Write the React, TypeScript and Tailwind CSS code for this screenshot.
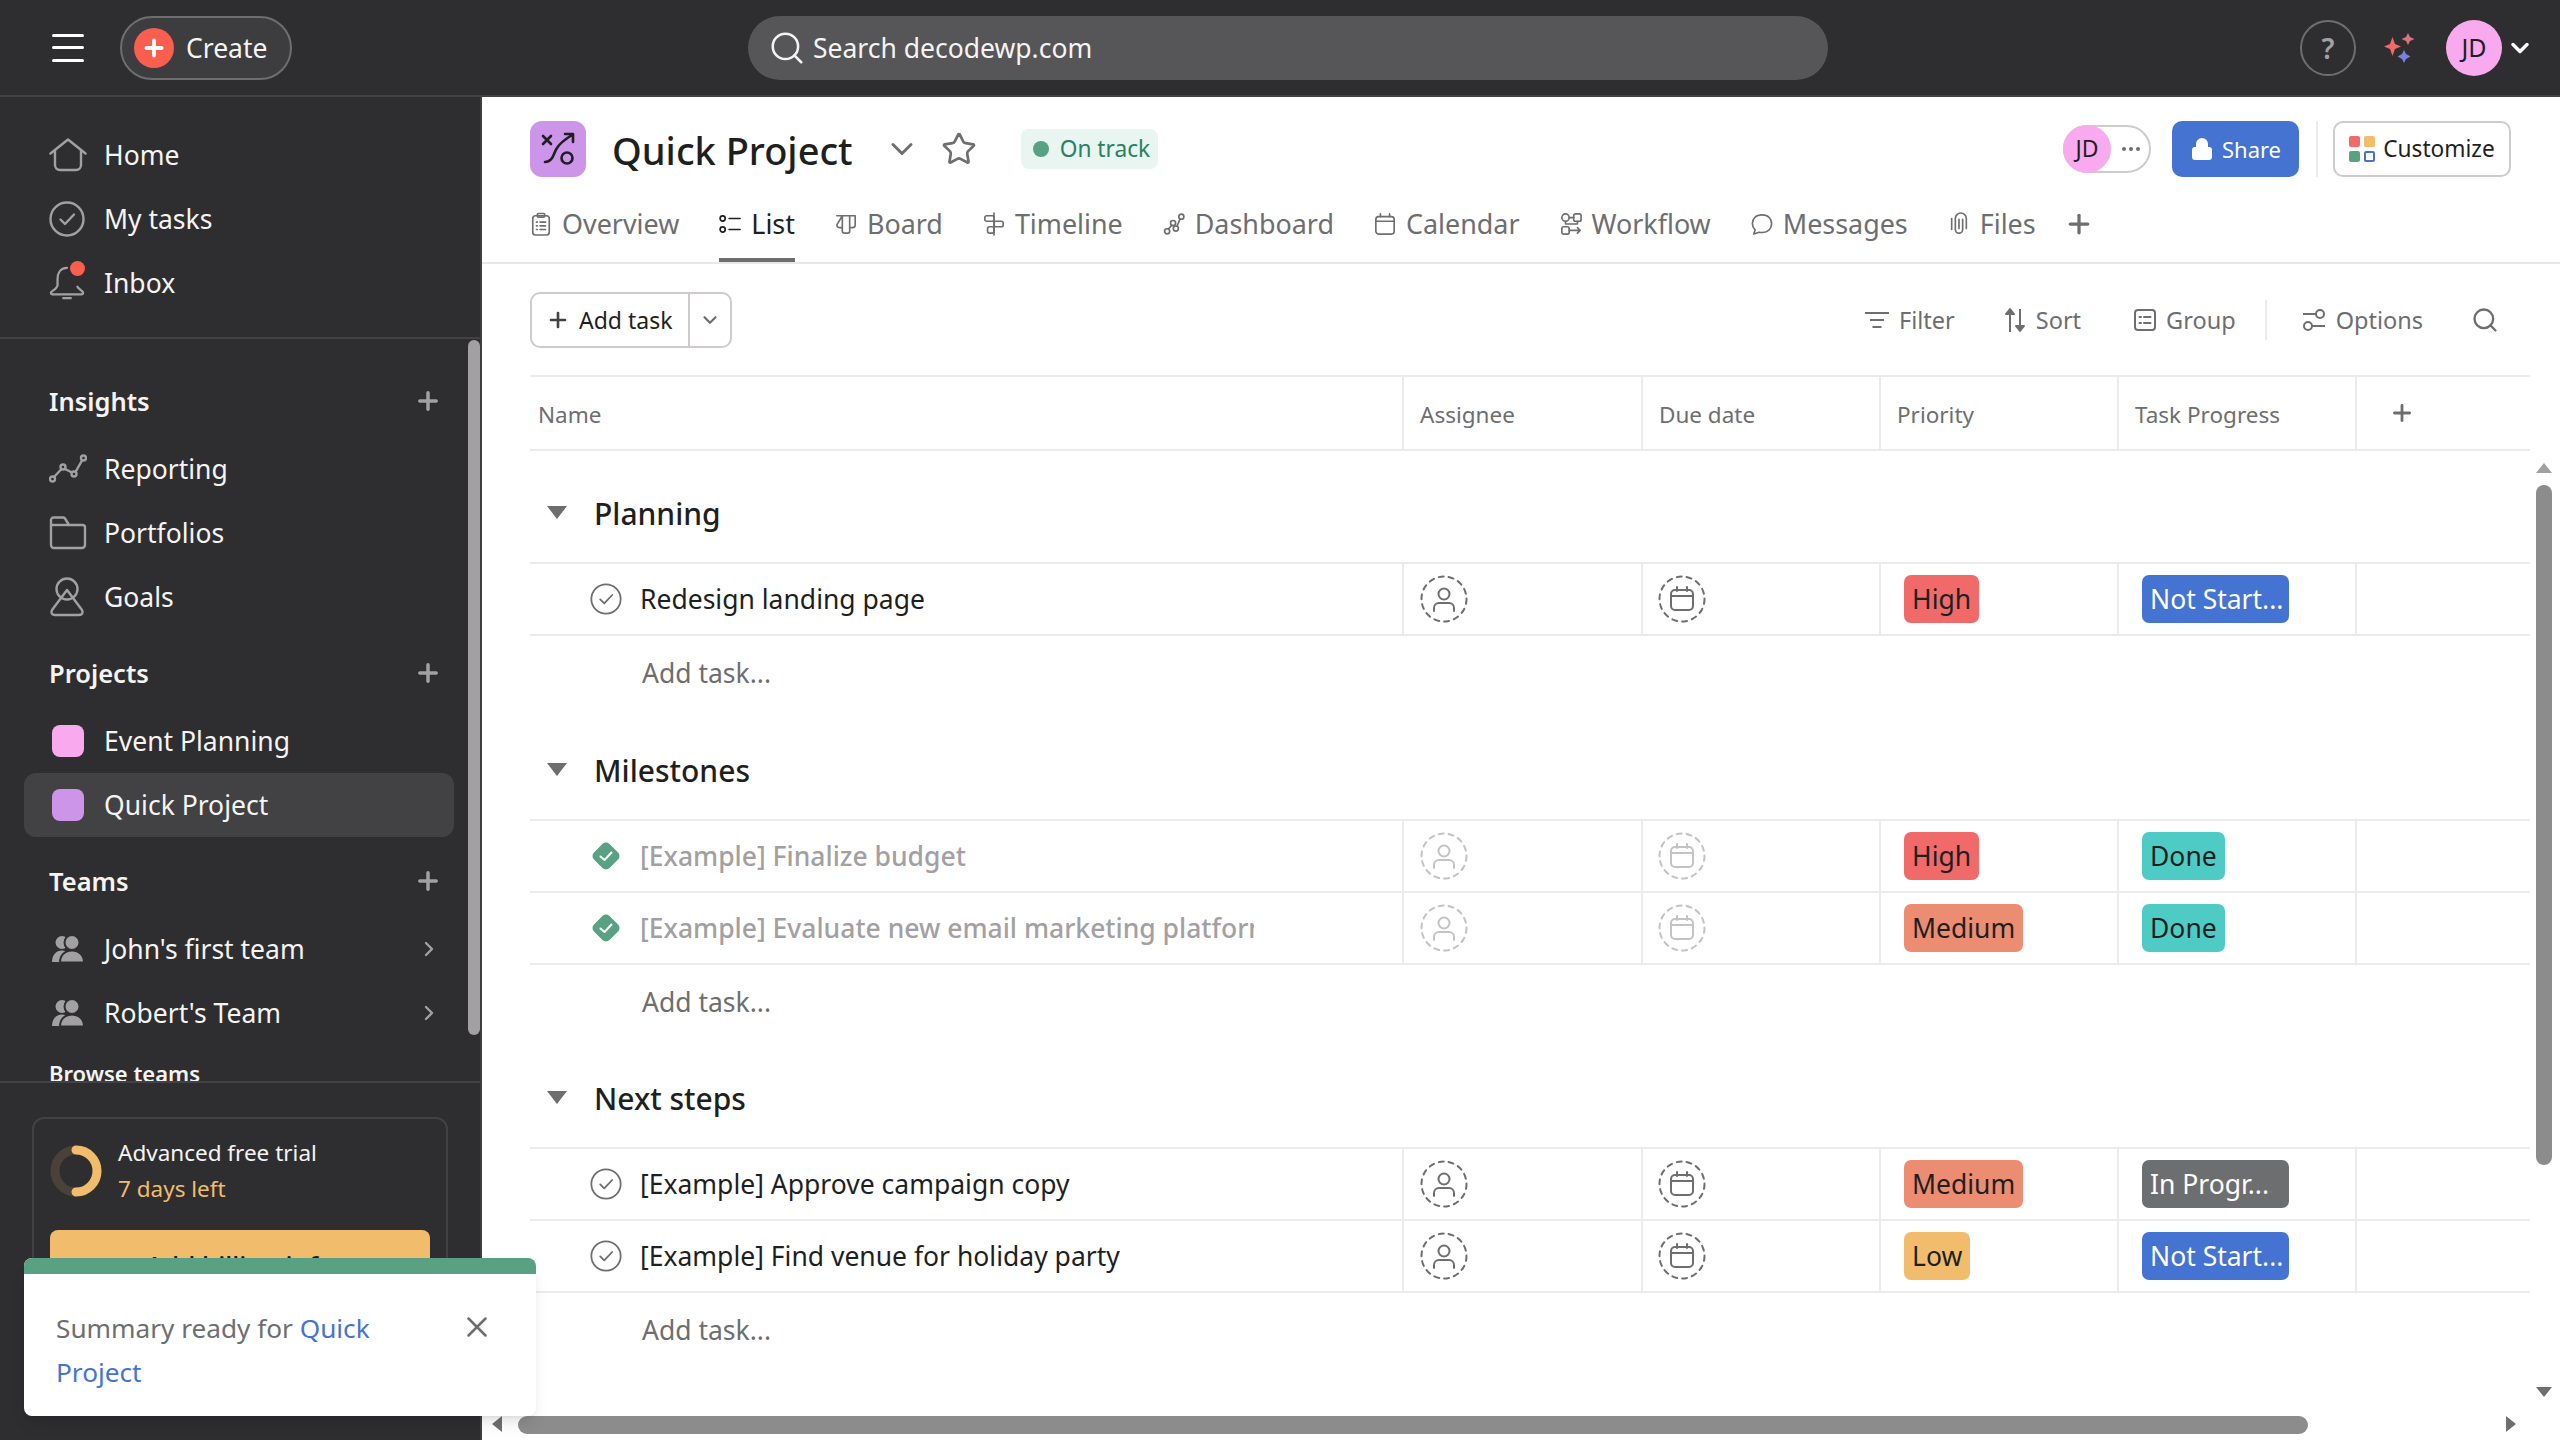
import React from 'react'
import { ChevronDown, ChevronRight, Plus, Search, Star, X, Lock } from 'lucide-react'

const font = "font-['Noto_Sans',sans-serif]"

const IconHome = () => (
    <svg width="38" height="34" viewBox="0 0 38 34" fill="none" stroke="#a2a0a2" strokeWidth="2.4" strokeLinejoin="round" strokeLinecap="round">
        <path d="M1.500 15.500 L19 1.500 L36.500 15.500" />
        <path d="M6 12 V27 a5 5 0 0 0 5 5 H27 a5 5 0 0 0 5-5 V12" />
    </svg>
)

const IconCheckCircle = ({ size = 36, color = '#a2a0a2', sw = 2.400 }: { size?: number; color?: string; sw?: number }) => (
    <svg width={size} height={size} viewBox="0 0 36 36" fill="none" stroke={color} strokeWidth={sw} strokeLinecap="round" strokeLinejoin="round">
        <circle cx="18" cy="18" r="16.500" />
        <path d="M11.500 18.500 L16 23 L25 13.500" />
    </svg>
)

const IconBell = () => (
    <svg width="36" height="38" viewBox="0 0 38 38" fill="none" stroke="#a2a0a2" strokeWidth="2.400" strokeLinecap="round" strokeLinejoin="round">
        <path d="M19 3 C11 3 9 10 9 15 V21 C9 25 3 27 2 29 C2 31 3 31 4 31 H34 C35 31 36 31 36 29 C35 27 31 25 30 23" />
        <path d="M15 35 H23" />
    </svg>
)

const IconReporting = () => (
    <svg width="38" height="30" viewBox="0 0 38 30" fill="none" stroke="#a2a0a2" strokeWidth="2.400">
        <circle cx="3.500" cy="25" r="2.500" />
        <circle cx="14" cy="13" r="2.500" />
        <circle cx="25" cy="20" r="2.500" />
        <circle cx="34.500" cy="4" r="2.500" />
        <path d="M5 23 L12.500 15 M16 15 L23 18.500 M26.500 18 L33 6.500" />
    </svg>
)

const IconFolder = () => (
    <svg width="38" height="34" viewBox="0 0 38 34" fill="none" stroke="#a2a0a2" strokeWidth="2.400" strokeLinejoin="round">
        <path d="M2 29 V4 a2.500 2.500 0 0 1 2.500-2.500 H14 a2.500 2.500 0 0 1 2 1 L20 9 H33.500 a2.500 2.500 0 0 1 2.500 2.500 V29 a3 3 0 0 1-3 3 H5 a3 3 0 0 1-3-3 Z" />
        <path d="M2 9 H20" />
    </svg>
)

const IconGoals = () => (
    <svg width="36" height="40" viewBox="0 0 36 40" fill="none" stroke="#a2a0a2" strokeWidth="2.400" strokeLinejoin="round">
        <circle cx="18" cy="12" r="10.500" />
        <path d="M18 13 L3 33 C1.500 36 3 38 6 38 H30 C33 38 34.500 36 33 33 Z" />
    </svg>
)

const IconTeam = () => (
    <svg className="ml-[3px]" width="32" height="28" viewBox="0 0 32 28" fill="#a2a0a2">
        <circle cx="10" cy="7.500" r="6.500" />
        <path d="M0 27 C0 20 4 15.500 10 15.500 C13 15.500 15 16.500 16 18 L10 27 Z" />
        <circle cx="20" cy="7.500" r="7.500" stroke="#2e2e30" strokeWidth="2" />
        <path d="M8 27.500 C8 20 13 15.500 20 15.500 C27 15.500 32 20 32 27.500 Z" stroke="#2e2e30" strokeWidth="2" />
    </svg>
)

const IconSpark = () => (
    <svg width="32" height="30" viewBox="0 0 32 30">
        <path d="M8.500 4 L11 11 L17 13.500 L11 16 L8.500 23 L6 16 L0 13.500 L6 11 Z" fill="#f06a6a" />
        <path d="M24 0 L26 4 L30.500 6 L26 8 L24 12 L22 8 L17.500 6 L22 4 Z" fill="#d9737f" />
        <path d="M20 17 L22 21 L26.500 23.500 L22 26 L20 30 L18 26 L13.500 23.500 L18 21 Z" fill="#7982d8" />
    </svg>
)

const TabIcon = ({ name }: { name: string }) => {
    const stroke = name === 'List' ? '#1e1f21' : '#6d6e6f'
    const p = { fill: 'none', stroke, strokeWidth: 1.800, strokeLinecap: 'round' as const, strokeLinejoin: 'round' as const }
    return (
        <svg width="22" height="24" viewBox="0 0 24 26" {...p}>
            {name === 'Overview' && (<>
                <rect x="3" y="4" width="18" height="21" rx="3" />
                <rect x="8" y="1.500" width="8" height="4" rx="1" />
                <path d="M7 11 H8 M11 11 H17 M7 15 H8 M11 15 H17 M7 19 H8 M11 19 H17" />
            </>)}
            {name === 'List' && (<>
                <circle cx="4" cy="7" r="2.800" />
                <circle cx="4" cy="19" r="2.800" />
                <path d="M11 7 H23 M11 19 H23" />
            </>)}
            {name === 'Board' && (<>
                <path d="M2 4 H22 V14 a3 3 0 0 1-3 3 H16 V4 M16 4 V21 a2 2 0 0 1-2 2 H10 a2 2 0 0 1-2-2 V4 M8 4 V17 H5 a3 3 0 0 1-3-3 Z" />
            </>)}
            {name === 'Timeline' && (<>
                <path d="M12 1 V25" />
                <rect x="2" y="4" width="10" height="6" rx="2" />
                <rect x="12" y="10" width="10" height="6" rx="2" />
                <rect x="5" y="16" width="7" height="7" rx="2" />
            </>)}
            {name === 'Dashboard' && (<>
                <circle cx="4.500" cy="21" r="2.800" />
                <circle cx="11" cy="12" r="2.800" />
                <circle cx="14" cy="18" r="2.800" />
                <circle cx="20" cy="5" r="2.800" />
                <path d="M6 18.500 L9.500 14.500 M18.500 7.500 L15.500 15" />
            </>)}
            {name === 'Calendar' && (<>
                <rect x="2" y="5" width="20" height="19" rx="3" />
                <path d="M2 10 H22 M7 2 V5 M17 2 V5" />
            </>)}
            {name === 'Workflow' && (<>
                <circle cx="6" cy="6" r="4" />
                <rect x="15" y="2" width="8" height="8" rx="2" />
                <rect x="2" y="16" width="8" height="8" rx="2" />
                <path d="M10 6 H15 M6 10 V13 H19 V10 M10 20 H22 M19 17 L22 20 L19 23" />
            </>)}
            {name === 'Messages' && (
                <path d="M12 3 C5 3 1.500 7.500 1.500 12.500 C1.500 15.500 3 18 4.500 19.500 L3 24 L9 22 C10 22.200 11 22.300 12 22.300 C19 22.300 22.500 17.500 22.500 12.500 C22.500 7.500 19 3 12 3 Z" />
            )}
            {name === 'Files' && (
                <path d="M16 8 V19 a4 4 0 0 1-8 0 V7 a6 6 0 0 1 12 0 V18 M12 8 V18 M4 7 V19" />
            )}
        </svg>
    )
}

const DashedCircle = ({ kind, faded }: { kind: 'person' | 'date'; faded?: boolean }) => {
    const color = faded ? '#c4c2c2' : '#6d6e6f'
    return (
        <svg width="48" height="48" viewBox="0 0 48 48" fill="none" stroke={color} strokeWidth="2">
            <circle cx="24" cy="24" r="22.500" strokeDasharray="5 5" strokeLinecap="round" />
            {kind === 'person' ? (<>
                <circle cx="24" cy="19" r="5.500" />
                <path d="M14 36 V33 a5 5 0 0 1 5-5 H29 a5 5 0 0 1 5 5 V36" strokeLinecap="round" />
            </>) : (<>
                <rect x="13" y="15" width="22" height="20" rx="4" />
                <path d="M13 21 H35 M19 12 V16 M29 12 V16" strokeLinecap="round" />
            </>)}
        </svg>
    )
}

const SideRow = ({ icon, label, active, chevron }: { icon: React.ReactNode; label: string; active?: boolean; chevron?: boolean }) => (
    <div className={`flex h-16 items-center rounded-xl pl-[25px] pr-[12px] ${active ? 'bg-[#424244]' : ''}`}>
        <div className="flex w-[55px] shrink-0">{icon}</div>
        <span className="pt-[2px] text-[26.500px] text-[#f5f4f3]">{label}</span>
        {chevron && <ChevronRight className="ml-auto mr-[1px] text-[#a2a0a2]" size={24} strokeWidth={2.400} />}
    </div>
)

const SideHeader = ({ label, mt }: { label: string; mt?: string }) => (
    <div className={`flex h-[72px] items-center pl-[25px] pr-[12px] ${mt ?? ''}`}>
        <span className="text-[25.500px] font-semibold text-[#f5f4f3]">{label}</span>
        <Plus className="ml-auto text-[#a2a0a2]" size={28} strokeWidth={3} />
    </div>
)

const Swatch = ({ color }: { color: string }) => <div className={`ml-[3px] h-8 w-8 rounded-lg ${color}`} />

const Pill = ({ text, color, dark, width }: { text: string; color: string; dark?: boolean; width?: string }) => (
    <div className={`flex h-12 items-center overflow-hidden whitespace-nowrap rounded-[7px] px-2 pt-[1px] text-[26.500px] ${color} ${dark ? 'text-[#1e1f21]' : 'text-white'} ${width ?? ''}`}>
        {text}
    </div>
)

type Task = {
    name: string
    done?: boolean
    priority: [string, string, string?]
    progress: [string, string, boolean?, string?]
}

const Row = ({ task }: { task: Task }) => (
    <div className="flex h-[72px] border-b-2 border-[#edeaea]">
        <div className="flex w-[872px] items-center pl-[60px] pr-[148px]">
            {task.done ? (
                <svg className="shrink-0" width="32" height="32" viewBox="0 0 32 32">
                    <rect x="5" y="5" width="22" height="22" rx="5" fill="#58a182" transform="rotate(45 16 16)" />
                    <path d="M10.500 16.500 L14.500 20 L21.500 12.500" fill="none" stroke="white" strokeWidth="2" strokeLinecap="round" strokeLinejoin="round" />
                </svg>
            ) : (
                <div className="flex w-8 shrink-0"><IconCheckCircle size={32} color="#6d6e6f" sw={2} /></div>
            )}
            <div className="ml-[18px] min-w-0 flex-1 overflow-hidden pt-[2px]">
                <span className={`whitespace-nowrap text-[26.500px] ${task.done ? 'font-medium text-[#a2a0a2]' : 'text-[#1e1f21]'}`}>{task.name}</span>
            </div>
        </div>
        <div className="flex w-[239px] items-center border-l-2 border-[#edeaea] pl-[16px]"><DashedCircle kind="person" faded={task.done} /></div>
        <div className="flex w-[238px] items-center border-l-2 border-[#edeaea] pl-[15px]"><DashedCircle kind="date" faded={task.done} /></div>
        <div className="flex w-[238px] items-center border-l-2 border-[#edeaea] pl-[23px]">
            <Pill text={task.priority[0]} color={task.priority[1]} dark={task.priority[2] === 'dark'} />
        </div>
        <div className="flex w-[238px] items-center border-l-2 border-[#edeaea] pl-[23px]">
            <Pill text={task.progress[0]} color={task.progress[1]} dark={task.progress[2]} width={task.progress[3]} />
        </div>
        <div className="flex-1 border-l-2 border-[#edeaea]" />
    </div>
)

const Section = ({ title, tasks, gap }: { title: string; tasks: Task[]; gap?: string }) => (
    <div className={gap ?? ''}>
        <div className="flex h-[101px] items-center border-b-2 border-[#edeaea]">
            <svg className="ml-[17px]" width="20" height="13" viewBox="0 0 20 13"><path d="M0 0 H20 L10 13 Z" fill="#6d6e6f" /></svg>
            <span className="ml-[27px] pt-[1px] text-[30px] font-medium text-[#1e1f21]">{title}</span>
        </div>
        {tasks.map(t => <Row key={t.name} task={t} />)}
        <div className="flex h-[74px] items-center pl-[112px] pt-[1px] text-[26.500px] text-[#6d6e6f]">Add task...</div>
    </div>
)

const high: [string, string, string?] = ['High', 'bg-[#f06a6a]', 'dark']
const medium: [string, string, string?] = ['Medium', 'bg-[#ec8d71]', 'dark']
const low: [string, string, string?] = ['Low', 'bg-[#f1bd6c]', 'dark']
const notStarted: [string, string, boolean?, string?] = ['Not Start...', 'bg-[#4573d2]', false, 'w-[147px]']
const done: [string, string, boolean?, string?] = ['Done', 'bg-[#4ecbc4]', true]
const inProgress: [string, string, boolean?, string?] = ['In Progr...', 'bg-[#6d6e6f]', false, 'w-[147px]']

const tabs = ['Overview', 'List', 'Board', 'Timeline', 'Dashboard', 'Calendar', 'Workflow', 'Messages', 'Files']

export default function App() {
    return (
        <div className={`relative flex h-screen w-screen flex-col overflow-hidden bg-white ${font}`}>
            {/* top bar */}
            <div className="flex h-[97px] shrink-0 items-center border-b-2 border-[#424244] bg-[#2e2e30] pl-[52px] pr-[26px]">
                <div className="flex h-[28px] w-[32px] flex-col justify-between">
                    <i className="h-[3px] rounded-full bg-white" />
                    <i className="h-[3px] rounded-full bg-white" />
                    <i className="h-[3px] rounded-full bg-white" />
                </div>
                <div className="ml-[36px] flex h-16 w-[172px] items-center rounded-full border-2 border-[#6d6e6f] bg-[#3d3d3f] pl-[12px]">
                    <div className="flex h-10 w-10 items-center justify-center rounded-full bg-[#f95e4f]">
                        <Plus className="text-white" size={26} strokeWidth={3.500} />
                    </div>
                    <span className="ml-[12px] pt-[2px] text-[26.500px] text-[#f5f4f3]">Create</span>
                </div>
                <div className="ml-[456px] flex h-16 w-[1080px] items-center rounded-full bg-[#565557] pl-[20px]">
                    <Search className="text-[#f5f4f3]" size={38} strokeWidth={1.600} />
                    <span className="ml-[7px] pt-[2px] text-[26.500px] text-[#f5f4f3]">Search decodewp.com</span>
                </div>
                <div className="ml-auto flex h-14 w-14 items-center justify-center rounded-full border-2 border-[#6d6e6f] text-[28px] font-semibold text-[#a2a0a2]">?</div>
                <div className="ml-[28px] flex"><IconSpark /></div>
                <div className="ml-[30px] flex h-14 w-14 items-center justify-center rounded-full bg-[#f9aaef] text-[25px] text-[#1e1f21]">JD</div>
                <ChevronDown className="ml-[4px] text-white" size={28} strokeWidth={3} />
            </div>

            <div className="flex min-h-0 flex-1">
                {/* sidebar */}
                <div className="relative flex w-[482px] shrink-0 flex-col border-r-2 border-[#3f3f41] bg-[#2e2e30]">
                    <div className="h-[242px] shrink-0 border-b-2 border-[#424244] pt-[26px] pl-[24px] pr-[26px]">
                        <SideRow icon={<IconHome />} label="Home" />
                        <SideRow icon={<IconCheckCircle />} label="My tasks" />
                        <SideRow icon={
                            <div className="relative flex">
                                <IconBell />
                                <div className="absolute -top-[3px] right-0 h-[15px] w-[15px] rounded-full bg-[#f95e4f]" />
                            </div>
                        } label="Inbox" />
                    </div>
                    <div className="h-[744px] shrink-0 overflow-hidden border-b-2 border-[#424244] pt-[26px] pl-[24px] pr-[26px]">
                        <SideHeader label="Insights" />
                        <SideRow icon={<IconReporting />} label="Reporting" />
                        <SideRow icon={<IconFolder />} label="Portfolios" />
                        <SideRow icon={<IconGoals />} label="Goals" />
                        <SideHeader label="Projects" mt="mt-2" />
                        <SideRow icon={<Swatch color="bg-[#f9aaef]" />} label="Event Planning" />
                        <SideRow icon={<Swatch color="bg-[#cd95ea]" />} label="Quick Project" active />
                        <SideHeader label="Teams" mt="mt-2" />
                        <SideRow icon={<IconTeam />} label="John's first team" chevron />
                        <SideRow icon={<IconTeam />} label="Robert's Team" chevron />
                        <div className="pl-[25px] pt-[12px] text-[22px] leading-[32px] font-semibold text-[#f5f4f3]">Browse teams</div>
                    </div>
                    <div className="mx-[32px] mt-[34px] rounded-xl border-2 border-[#424244] px-[16px] pt-[16px]">
                        <div className="flex items-center">
                            <svg width="52" height="52" viewBox="0 0 52 52" fill="none" strokeWidth="9">
                                <circle cx="26" cy="26" r="21" stroke="#4a4238" />
                                <path d="M26 5 A21 21 0 0 1 26 47" stroke="#f1bd6c" strokeLinecap="round" />
                            </svg>
                            <div className="ml-[16px] flex flex-col leading-[36px]">
                                <span className="text-[22.500px] text-[#f5f4f3]">Advanced free trial</span>
                                <span className="text-[22.500px] text-[#f1bd6c]">7 days left</span>
                            </div>
                        </div>
                        <div className="mt-[23px] flex h-[70px] items-center justify-center rounded-lg bg-[#f1bd6c] text-[26px] font-medium text-[#1e1f21]">Add billing info</div>
                    </div>
                    {/* sidebar scrollbar */}
                    <div className="absolute left-[468px] top-[243px] h-[695px] w-[12px] rounded-full bg-[#a2a0a2]" />
                </div>

                {/* main */}
                <div className="relative flex min-w-0 flex-1 flex-col">
                    <div className="flex h-[97px] shrink-0 items-end pl-[48px] pr-[49px] pb-[15px]">
                        <div className="flex w-full items-center">
                            <div className="flex h-14 w-14 items-center justify-center rounded-xl bg-[#cd95ea]">
                                <svg width="38" height="38" viewBox="0 0 38 38" fill="none" stroke="#1e1f21" strokeWidth="2.600" strokeLinecap="round" strokeLinejoin="round">
                                    <path d="M4 6 L12 14 M12 6 L4 14" />
                                    <circle cx="28" cy="28" r="5.500" />
                                    <path d="M6 32 C14 32 14 24 18 18 C21 13 25 10 33 5 M26 4 H34 V12" />
                                </svg>
                            </div>
                            <span className="ml-[26px] pt-[4px] text-[38px] font-medium text-[#1e1f21]">Quick Project</span>
                            <ChevronDown className="ml-[31px] text-[#6d6e6f]" size={36} strokeWidth={2} />
                            <Star className="ml-[21px] text-[#6d6e6f]" size={36} strokeWidth={1.800} />
                            <div className="ml-[44px] flex h-10 items-center rounded-lg bg-[#e8f5f0] pl-[12px] pr-[8px]">
                                <div className="h-4 w-4 rounded-full bg-[#58a182]" />
                                <span className="ml-[11px] pt-[2px] text-[22.700px] text-[#2b8061]">On track</span>
                            </div>
                            <div className="ml-auto flex items-center">
                                <div className="relative flex h-12 w-[88px] items-center justify-end rounded-full border-2 border-[#cfcbcb] pr-[9px]">
                                    <div className="absolute -left-[2px] -top-[2px] flex h-12 w-12 items-center justify-center rounded-full bg-[#f9aaef] text-[23px] text-[#1e1f21]">JD</div>
                                    <span className="flex gap-[3px]">
                                        <i className="h-1 w-1 rounded-full bg-[#6d6e6f]" />
                                        <i className="h-1 w-1 rounded-full bg-[#6d6e6f]" />
                                        <i className="h-1 w-1 rounded-full bg-[#6d6e6f]" />
                                    </span>
                                </div>
                                <div className="ml-[21px] flex h-14 w-[127px] items-center justify-center rounded-[10px] bg-[#4573d2] text-white">
                                    <Lock size={24} fill="white" strokeWidth={2} />
                                    <span className="ml-[8px] pt-[2px] text-[22px]">Share</span>
                                </div>
                                <div className="ml-[17px] h-14 w-[2px] bg-[#edeaea]" />
                                <div className="ml-[15px] flex h-14 w-[178px] items-center justify-center rounded-[10px] border-2 border-[#cfcbcb]">
                                    <div className="grid grid-cols-2 gap-[4px]">
                                        <i className="h-[11px] w-[11px] rounded-[2px] bg-[#f06a6a]" />
                                        <i className="h-[11px] w-[11px] rounded-[2px] bg-[#f1bd6c]" />
                                        <i className="h-[11px] w-[11px] rounded-[2px] bg-[#58a182]" />
                                        <i className="h-[11px] w-[11px] rounded-[2px] border-2 border-[#4573d2]" />
                                    </div>
                                    <span className="ml-[8px] pt-[2px] text-[22.700px] text-[#1e1f21]">Customize</span>
                                </div>
                            </div>
                        </div>
                    </div>

                    {/* tabs */}
                    <div className="flex h-[70px] shrink-0 items-stretch gap-[40px] border-b-2 border-[#e8e8e8] pl-[48px]">
                        {tabs.map(t => (
                            <div key={t} className={`flex items-center gap-[10px] border-b-4 pb-[5px] ${t === 'List' ? 'border-[#6d6e6f] text-[#1e1f21]' : 'border-transparent text-[#6d6e6f]'}`}>
                                <TabIcon name={t} />
                                <span className="pt-[2px] text-[26.900px]">{t}</span>
                            </div>
                        ))}
                        <div className="-ml-[12px] flex items-center pb-[9px]"><Plus className="text-[#6d6e6f]" size={30} strokeWidth={2.600} /></div>
                    </div>

                    {/* toolbar */}
                    <div className="ml-[48px] mr-[30px] flex h-[113px] shrink-0 items-center border-b-2 border-[#edeaea]">
                        <div className="flex h-14 w-[202px] items-center rounded-[10px] border-2 border-[#cfcbcb]">
                            <div className="flex h-full flex-1 items-center border-r-2 border-[#cfcbcb] pl-[14px]">
                                <Plus className="text-[#424244]" size={24} strokeWidth={2.600} />
                                <span className="ml-[9px] pt-[2px] text-[23px] text-[#1e1f21]">Add task</span>
                            </div>
                            <ChevronDown className="mx-[9px] text-[#6d6e6f]" size={22} strokeWidth={2.400} />
                        </div>
                        <div className="ml-auto flex items-center pr-[31px] text-[23.500px] text-[#6d6e6f]">
                            <div className="flex items-center gap-[10px]">
                                <svg width="24" height="24" viewBox="0 0 24 24" fill="none" stroke="#6d6e6f" strokeWidth="2"><path d="M0 5 H24 M5 12 H19 M7.500 19 H16.500" /></svg>
                                <span className="pt-[2px]">Filter</span>
                            </div>
                            <div className="ml-[49px] flex items-center gap-[10px]">
                                <svg width="22" height="26" viewBox="0 0 22 26" fill="#6d6e6f" stroke="#6d6e6f" strokeWidth="2" strokeLinejoin="round"><path d="M6 25 V6" /><path d="M2 7 L6 2 L10 7 Z" /><path d="M16 2 V20" /><path d="M12 19 L16 24 L20 19 Z" /></svg>
                                <span className="pt-[2px]">Sort</span>
                            </div>
                            <div className="ml-[53px] flex items-center gap-[10px]">
                                <svg width="22" height="24" viewBox="0 0 22 24" fill="none" stroke="#6d6e6f" strokeWidth="2" strokeLinecap="round"><rect x="1" y="2" width="20" height="20" rx="3" /><path d="M5.500 9 H7 M10 9 H16.500 M5.500 15 H7 M10 15 H16.500" /></svg>
                                <span className="pt-[2px]">Group</span>
                            </div>
                            <div className="ml-[29px] mr-[35px] h-10 w-[2px] bg-[#edeaea]" />
                            <div className="flex items-center gap-[10px]">
                                <svg width="24" height="24" viewBox="0 0 24 24" fill="none" stroke="#6d6e6f" strokeWidth="2"><circle cx="18" cy="6" r="4" /><circle cx="6" cy="18" r="4" /><path d="M1 6 H14 M10 18 H23" /></svg>
                                <span className="pt-[2px]">Options</span>
                            </div>
                            <Search className="ml-[48px] text-[#6d6e6f]" size={28} strokeWidth={2} />
                        </div>
                    </div>

                    {/* table */}
                    <div className="ml-[48px] mr-[30px] flex-1">
                        <div className="flex h-[74px] border-b-2 border-[#edeaea] text-[22.500px] text-[#6d6e6f]">
                            <div className="flex w-[872px] items-center pl-[8px] pt-[3px]">Name</div>
                            <div className="flex w-[239px] items-center border-l-2 border-[#edeaea] pl-[16px] pt-[3px]">Assignee</div>
                            <div className="flex w-[238px] items-center border-l-2 border-[#edeaea] pl-[16px] pt-[3px]">Due date</div>
                            <div className="flex w-[238px] items-center border-l-2 border-[#edeaea] pl-[16px] pt-[3px]">Priority</div>
                            <div className="flex w-[238px] items-center border-l-2 border-[#edeaea] pl-[16px] pt-[3px]">Task Progress</div>
                            <div className="flex flex-1 items-center border-l-2 border-[#edeaea] pl-[32px]">
                                <Plus className="text-[#6d6e6f]" size={26} strokeWidth={2.600} />
                            </div>
                        </div>
                        <div className="pt-[12px]">
                            <Section title="Planning" tasks={[{ name: 'Redesign landing page', priority: high, progress: notStarted }]} />
                            <Section title="Milestones" gap="mt-[10px]" tasks={[
                                { name: '[Example] Finalize budget', done: true, priority: high, progress: done },
                                { name: '[Example] Evaluate new email marketing platform', done: true, priority: medium, progress: done },
                            ]} />
                            <Section title="Next steps" gap="mt-[9px]" tasks={[
                                { name: '[Example] Approve campaign copy', priority: medium, progress: inProgress },
                                { name: '[Example] Find venue for holiday party', priority: low, progress: notStarted },
                            ]} />
                        </div>
                    </div>

                    {/* scrollbars */}
                    <div className="absolute right-[8px] top-[388px] h-[680px] w-4 rounded-full bg-[#8c8c8c]" />
                    <svg className="absolute right-[8px] top-[366px]" width="16" height="10" viewBox="0 0 16 10"><path d="M8 0 L16 10 H0 Z" fill="#a2a0a2" /></svg>
                    <svg className="absolute right-[8px] top-[1290px]" width="16" height="10" viewBox="0 0 16 10"><path d="M8 10 L16 0 H0 Z" fill="#6d6e6f" /></svg>
                    <div className="absolute bottom-[6px] left-[36px] h-[18px] w-[1790px] rounded-full bg-[#8c8c8c]" />
                    <svg className="absolute bottom-[8px] left-[10px]" width="10" height="16" viewBox="0 0 10 16"><path d="M0 8 L10 0 V16 Z" fill="#6d6e6f" /></svg>
                    <svg className="absolute bottom-[8px] right-[44px]" width="10" height="16" viewBox="0 0 10 16"><path d="M10 8 L0 0 V16 Z" fill="#6d6e6f" /></svg>
                </div>
            </div>

            {/* toast */}
            <div className="absolute left-[24px] top-[1258px] h-[158px] w-[512px] overflow-hidden rounded-lg bg-white shadow-lg">
                <div className="h-4 bg-[#58a182]" />
                <div className="flex pl-[32px] pr-[42px] pt-[32px]">
                    <p className="w-[350px] text-[26.200px] leading-[44px] text-[#6d6e6f]">Summary ready for <span className="text-[#4573d2]">Quick Project</span></p>
                    <X className="ml-auto mt-[4px] text-[#6d6e6f]" size={34} strokeWidth={1.800} />
                </div>
            </div>
        </div>
    )
}
